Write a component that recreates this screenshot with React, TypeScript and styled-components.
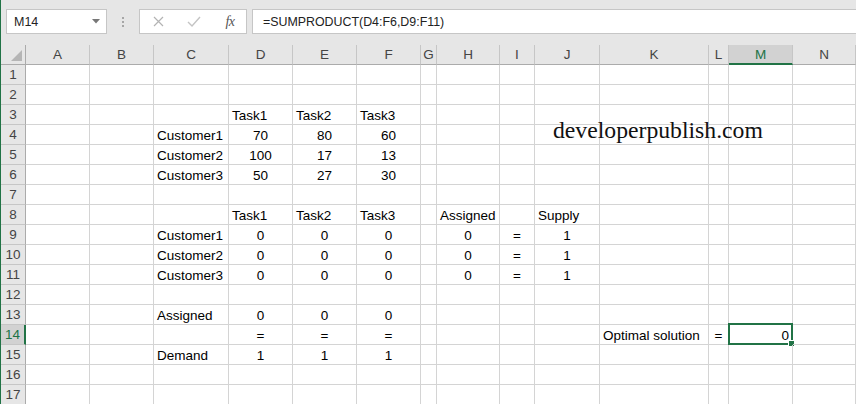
import React from 'react';
import styled, { createGlobalStyle } from 'styled-components';

const GlobalStyle = createGlobalStyle`
  html, body {
    margin: 0;
    padding: 0;
    overflow: hidden;
    background: #ffffff;
  }
  body {
    font-family: "Liberation Sans", Arial, sans-serif;
  }
`;

const GREEN = '#217346';
const GRID = '#d4d4d4';

const Window = styled.div`
  position: relative;
  width: 855px;
  height: 404px;
  border-left: 1px solid ${GREEN};
  background: #ffffff;
  overflow: hidden;
`;

const FormulaBar = styled.div`
  height: 45px;
  box-sizing: border-box;
  padding-top: 9px;
  background: #e6e6e6;
  display: flex;
  align-items: flex-start;
`;

const NameBox = styled.div`
  width: 101px;
  height: 25px;
  box-sizing: border-box;
  margin-left: 5px;
  background: #ffffff;
  border: 1px solid #c6c6c6;
  display: flex;
  align-items: center;
  justify-content: space-between;
  padding: 0 6px 0 7px;
  font-size: 12.5px;
  color: #222;
`;

const Dots = styled.div`
  width: 32px;
  height: 25px;
  display: flex;
  flex-direction: column;
  align-items: center;
  justify-content: center;
  gap: 2px;

  span {
    width: 2px;
    height: 2px;
    background: #a6a6a6;
  }
`;

const FxBox = styled.div`
  width: 108px;
  height: 25px;
  box-sizing: border-box;
  background: #ffffff;
  border: 1px solid #c6c6c6;
  display: grid;
  grid-template-columns: 36px 36px 36px;
  align-items: center;
  justify-items: center;
`;

const Fx = styled.span`
  font-family: "Liberation Serif", "Times New Roman", serif;
  font-style: italic;
  font-size: 14px;
  color: #555;
  letter-spacing: -0.5px;
`;

const FormulaInput = styled.div`
  flex: 1;
  height: 25px;
  box-sizing: border-box;
  margin-left: 5px;
  background: #ffffff;
  border: 1px solid #c6c6c6;
  border-right: none;
  display: flex;
  align-items: center;
  padding-left: 10px;
  font-size: 12.4px;
  color: #222;
`;

const Sheet = styled.div`
  position: relative;
  display: grid;
  grid-template-columns: 25px 64px 64px 75px 64px 64px 64px 16px 63px 35px 65px 109px 20px 64px 63px;
  grid-auto-rows: 20px;
`;

const Corner = styled.div`
  background: #e6e6e6;
  border-right: 1px solid #ababab;
  border-bottom: 1px solid #ababab;
  box-sizing: border-box;
  display: flex;
  align-items: flex-end;
  justify-content: flex-end;
  padding: 0 3px 3px 0;
`;

const ColHeader = styled.div<{ $selected?: boolean }>`
  box-sizing: border-box;
  background: ${(p) => (p.$selected ? '#d2d2d2' : '#e6e6e6')};
  border-right: 1px solid #c6c6c6;
  border-bottom: ${(p) => (p.$selected ? `2px solid ${GREEN}` : '1px solid #ababab')};
  display: flex;
  align-items: center;
  justify-content: center;
  font-size: 13.5px;
  color: ${(p) => (p.$selected ? GREEN : '#444')};
`;

const RowHeader = styled.div<{ $selected?: boolean }>`
  box-sizing: border-box;
  background: ${(p) => (p.$selected ? '#d2d2d2' : '#e6e6e6')};
  border-right: ${(p) => (p.$selected ? `2px solid ${GREEN}` : '1px solid #ababab')};
  border-bottom: 1px solid #c6c6c6;
  display: flex;
  align-items: center;
  justify-content: center;
  font-size: 13.5px;
  color: ${(p) => (p.$selected ? GREEN : '#444')};
`;

const Cell = styled.div<{ $align?: 'left' | 'center' | 'right' }>`
  position: relative;
  box-sizing: border-box;
  border-right: 1px solid ${GRID};
  border-bottom: 1px solid ${GRID};
  display: flex;
  align-items: flex-end;
  justify-content: ${(p) =>
    p.$align === 'center' ? 'center' : p.$align === 'right' ? 'flex-end' : 'flex-start'};
  padding: 0 3px;
  font-size: 13.5px;
  line-height: 16px;
  color: #000;
  white-space: nowrap;
`;

const Selection = styled.div`
  position: absolute;
  top: -2px;
  left: -1px;
  right: -1px;
  bottom: -1px;
  border: 2px solid ${GREEN};
  pointer-events: none;
`;

const FillHandle = styled.div`
  position: absolute;
  right: -4px;
  bottom: -4px;
  width: 5px;
  height: 5px;
  background: ${GREEN};
  border: 1px solid #ffffff;
`;

const Watermark = styled.div`
  position: absolute;
  left: 552px;
  top: 73px;
  font-family: "Liberation Serif", "Times New Roman", serif;
  font-size: 23.7px;
  line-height: 24px;
  color: #111;
  white-space: nowrap;
`;

const COLS = ['A', 'B', 'C', 'D', 'E', 'F', 'G', 'H', 'I', 'J', 'K', 'L', 'M', 'N'];

type Value = string | { v: string; a: 'left' | 'center' | 'right' };

const c = (v: string): Value => ({ v, a: 'center' });

const zeros = { D: c('0'), E: c('0'), F: c('0'), H: c('0'), I: c('='), J: c('1') };

const DATA: Record<number, Record<string, Value>> = {
  3: { D: 'Task1', E: 'Task2', F: 'Task3' },
  4: { C: 'Customer1', D: c('70'), E: c('80'), F: c('60') },
  5: { C: 'Customer2', D: c('100'), E: c('17'), F: c('13') },
  6: { C: 'Customer3', D: c('50'), E: c('27'), F: c('30') },
  8: { D: 'Task1', E: 'Task2', F: 'Task3', H: 'Assigned', J: 'Supply' },
  9: { C: 'Customer1', ...zeros },
  10: { C: 'Customer2', ...zeros },
  11: { C: 'Customer3', ...zeros },
  13: { C: 'Assigned', D: c('0'), E: c('0'), F: c('0') },
  14: { D: c('='), E: c('='), F: c('='), K: 'Optimal solution', L: c('='), M: { v: '0', a: 'right' } },
  15: { C: 'Demand', D: c('1'), E: c('1'), F: c('1') },
};

const ROWS = Array.from({ length: 17 }, (_, i) => i + 1);

const App = () => {
  return (
    <Window>
      <GlobalStyle />
      <FormulaBar>
        <NameBox>
          <span>M14</span>
          <svg width="8" height="5" viewBox="0 0 8 5">
            <polygon points="0,0 8,0 4,4.5" fill="#777" />
          </svg>
        </NameBox>
        <Dots>
          <span />
          <span />
          <span />
        </Dots>
        <FxBox>
          <svg width="11" height="11" viewBox="0 0 11 11">
            <path d="M1 1 L10 10 M10 1 L1 10" stroke="#b3b3b3" strokeWidth="1.2" />
          </svg>
          <svg width="14" height="11" viewBox="0 0 14 11">
            <path d="M1 6 L5 10 L13 1" stroke="#c4c4c4" strokeWidth="1.4" fill="none" />
          </svg>
          <Fx>fx</Fx>
        </FxBox>
        <FormulaInput>=SUMPRODUCT(D4:F6,D9:F11)</FormulaInput>
      </FormulaBar>

      <Sheet>
        <Corner>
          <svg width="11" height="11" viewBox="0 0 11 11">
            <polygon points="11,0 11,11 0,11" fill="#b5b5b5" />
          </svg>
        </Corner>
        {COLS.map((col) => (
          <ColHeader key={col} $selected={col === 'M'}>
            {col}
          </ColHeader>
        ))}
        {ROWS.map((row) => (
          <React.Fragment key={row}>
            <RowHeader $selected={row === 14}>{row}</RowHeader>
            {COLS.map((col) => {
              const val = DATA[row]?.[col];
              const text = typeof val === 'string' ? val : val?.v;
              const align = typeof val === 'string' || !val ? 'left' : val.a;
              const active = row === 14 && col === 'M';
              return (
                <Cell key={col} $align={align}>
                  {text}
                  {active && (
                    <Selection>
                      <FillHandle />
                    </Selection>
                  )}
                </Cell>
              );
            })}
          </React.Fragment>
        ))}
        <Watermark>developerpublish.com</Watermark>
      </Sheet>
    </Window>
  );
};

export default App;
